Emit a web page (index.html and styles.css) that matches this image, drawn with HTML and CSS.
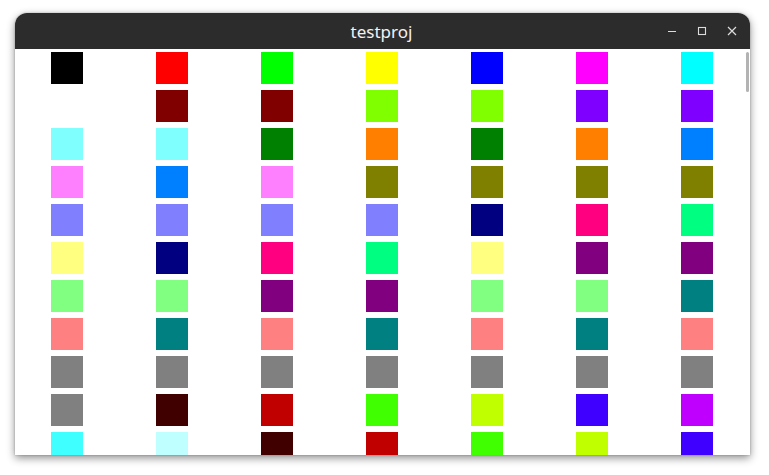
FILE: index.html
```html
<!DOCTYPE html>
<html>
<head>
<meta charset="utf-8">
<title>testproj</title>
<link rel="stylesheet" href="styles.css">
</head>
<body>
<div class="window">
  <div class="titlebar">
    <span class="title">testproj</span>
    <div class="controls">
      <svg class="btn" width="10" height="10" viewBox="0 0 10 10"><path d="M1 5.5h8" stroke="#dcdcdc" stroke-width="1.2"/></svg>
      <svg class="btn" width="10" height="10" viewBox="0 0 10 10"><rect x="1.5" y="1.5" width="7" height="7" fill="none" stroke="#dcdcdc" stroke-width="1.1"/></svg>
      <svg class="btn" width="10" height="10" viewBox="0 0 10 10"><path d="M1 1L9 9M9 1L1 9" stroke="#dcdcdc" stroke-width="1.2"/></svg>
    </div>
  </div>
  <div class="content">
    <div class="grid">
      <div class="sq" style="background:#000000"></div><div class="sq" style="background:#ff0000"></div><div class="sq" style="background:#00ff00"></div><div class="sq" style="background:#ffff00"></div><div class="sq" style="background:#0000ff"></div><div class="sq" style="background:#ff00ff"></div><div class="sq" style="background:#00ffff"></div>
      <div class="sq" style="background:#ffffff"></div><div class="sq" style="background:#800000"></div><div class="sq" style="background:#800000"></div><div class="sq" style="background:#80ff00"></div><div class="sq" style="background:#80ff00"></div><div class="sq" style="background:#8000ff"></div><div class="sq" style="background:#8000ff"></div>
      <div class="sq" style="background:#80ffff"></div><div class="sq" style="background:#80ffff"></div><div class="sq" style="background:#008000"></div><div class="sq" style="background:#ff8000"></div><div class="sq" style="background:#008000"></div><div class="sq" style="background:#ff8000"></div><div class="sq" style="background:#0080ff"></div>
      <div class="sq" style="background:#ff80ff"></div><div class="sq" style="background:#0080ff"></div><div class="sq" style="background:#ff80ff"></div><div class="sq" style="background:#808000"></div><div class="sq" style="background:#808000"></div><div class="sq" style="background:#808000"></div><div class="sq" style="background:#808000"></div>
      <div class="sq" style="background:#8080ff"></div><div class="sq" style="background:#8080ff"></div><div class="sq" style="background:#8080ff"></div><div class="sq" style="background:#8080ff"></div><div class="sq" style="background:#000080"></div><div class="sq" style="background:#ff0080"></div><div class="sq" style="background:#00ff80"></div>
      <div class="sq" style="background:#ffff80"></div><div class="sq" style="background:#000080"></div><div class="sq" style="background:#ff0080"></div><div class="sq" style="background:#00ff80"></div><div class="sq" style="background:#ffff80"></div><div class="sq" style="background:#800080"></div><div class="sq" style="background:#800080"></div>
      <div class="sq" style="background:#80ff80"></div><div class="sq" style="background:#80ff80"></div><div class="sq" style="background:#800080"></div><div class="sq" style="background:#800080"></div><div class="sq" style="background:#80ff80"></div><div class="sq" style="background:#80ff80"></div><div class="sq" style="background:#008080"></div>
      <div class="sq" style="background:#ff8080"></div><div class="sq" style="background:#008080"></div><div class="sq" style="background:#ff8080"></div><div class="sq" style="background:#008080"></div><div class="sq" style="background:#ff8080"></div><div class="sq" style="background:#008080"></div><div class="sq" style="background:#ff8080"></div>
      <div class="sq" style="background:#808080"></div><div class="sq" style="background:#808080"></div><div class="sq" style="background:#808080"></div><div class="sq" style="background:#808080"></div><div class="sq" style="background:#808080"></div><div class="sq" style="background:#808080"></div><div class="sq" style="background:#808080"></div>
      <div class="sq" style="background:#808080"></div><div class="sq" style="background:#400000"></div><div class="sq" style="background:#c00000"></div><div class="sq" style="background:#40ff00"></div><div class="sq" style="background:#c0ff00"></div><div class="sq" style="background:#4000ff"></div><div class="sq" style="background:#c000ff"></div>
      <div class="sq" style="background:#40ffff"></div><div class="sq" style="background:#c0ffff"></div><div class="sq" style="background:#400000"></div><div class="sq" style="background:#c00000"></div><div class="sq" style="background:#40ff00"></div><div class="sq" style="background:#c0ff00"></div><div class="sq" style="background:#4000ff"></div>
    </div>
    <div class="scrollbar"></div>
  </div>
</div>
</body>
</html>
```
FILE: styles.css
```css
html, body {
  margin: 0;
  padding: 0;
  background: #ffffff;
}
body {
  padding: 13px 0 0 15px;
  width: 769px;
  height: 475px;
  box-sizing: border-box;
  overflow: hidden;
}
.window {
  width: 735px;
  height: 442px;
  display: flex;
  flex-direction: column;
  border-radius: 12px 12px 0 0;
  box-shadow: 0 3px 8px rgba(0,0,0,0.45), 0 0 2px rgba(0,0,0,0.25);
  background: #ffffff;
  overflow: hidden;
}
.titlebar {
  height: 36px;
  flex: 0 0 36px;
  background: #2c2c2c;
  position: relative;
  display: flex;
  align-items: center;
  justify-content: center;
}
.title {
  color: #f2f2f2;
  font-family: "Noto Sans", "DejaVu Sans", sans-serif;
  font-size: 17px;
  line-height: 1;
  padding-top: 1px;
  padding-right: 2px;
}
.controls {
  position: absolute;
  right: 13px;
  top: 0;
  height: 36px;
  display: flex;
  align-items: center;
  gap: 20px;
}
.btn {
  display: block;
}
.content {
  flex: 1;
  position: relative;
  overflow: hidden;
}
.grid {
  display: grid;
  grid-template-columns: repeat(7, 105px);
  row-gap: 6px;
  padding: 3px 0 0 36px;
  justify-items: start;
}
.sq {
  width: 32px;
  height: 32px;
}
.scrollbar {
  position: absolute;
  right: 1px;
  top: 3px;
  width: 3px;
  height: 40px;
  border-radius: 2px;
  background: #b3b3b3;
}
```
